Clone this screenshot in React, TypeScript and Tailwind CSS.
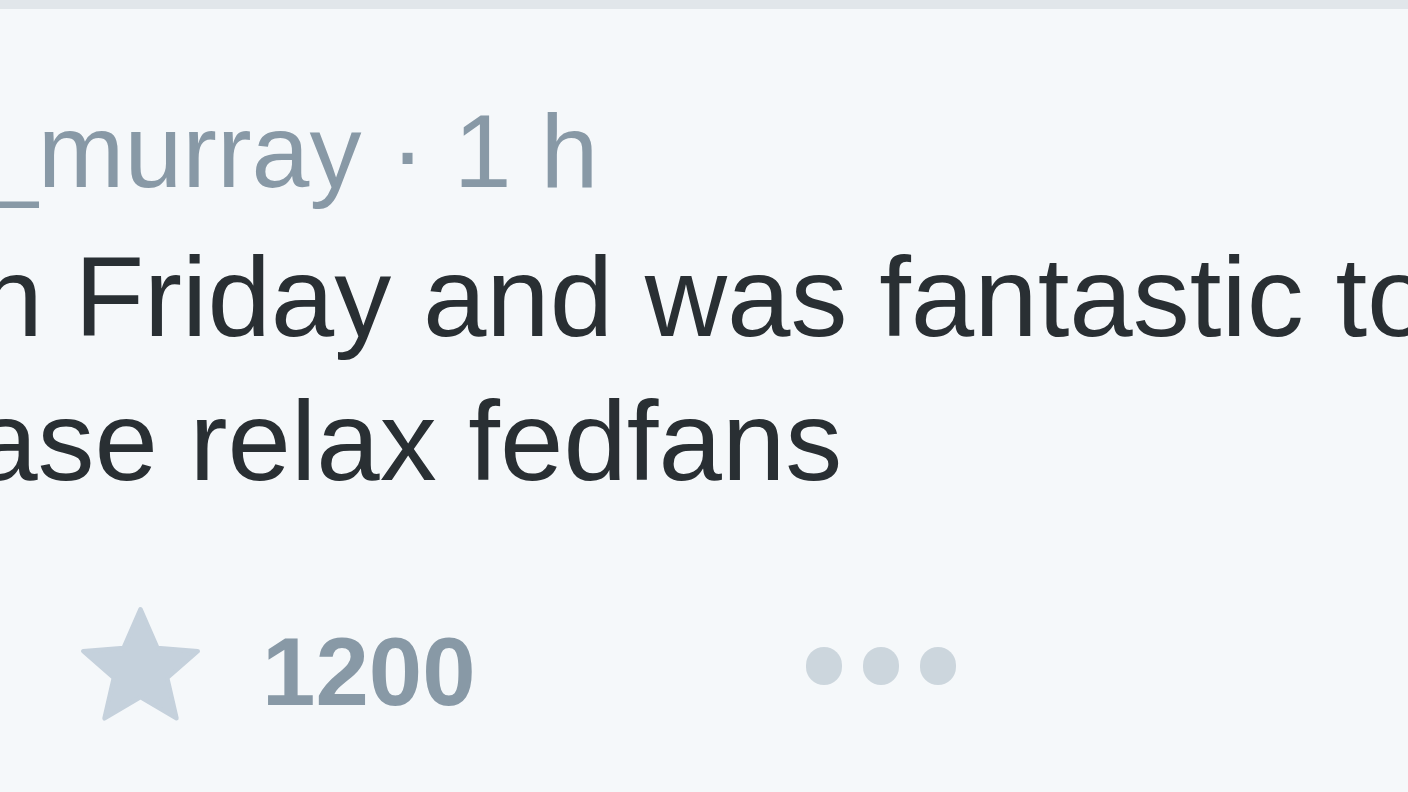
import React from "react";

export default function App() {
  return (
    <div className="w-[1408px] h-[792px] overflow-hidden bg-[#f5f8fa] flex flex-col" style={{ fontFamily: '"Liberation Sans", Arial, sans-serif' }}>
      <div className="h-[9px] bg-[#e1e6ea] shrink-0" />
      <div className="flex flex-col pt-[77px]">
        <div className="whitespace-nowrap text-[104px] leading-[130px] text-[#8899a6] ml-[-20px]">
          _murray · 1 h
        </div>
        <div className="mt-[9px] text-[114px] leading-[144px] text-[#292f33] whitespace-nowrap">
          <div className="ml-[-84px]">on Friday and was fantastic to see</div>
          <div className="ml-[-178px]">please relax fedfans</div>
        </div>
        <div className="mt-[93px] h-[120px] flex items-center pl-[75px]">
          <svg width="131" height="131" viewBox="0 0 24 24" className="shrink-0">
            <path
              d="M12 1.5l3.1 7.1 7.4.6-5.6 4.9 1.7 7.4L12 17.6l-6.6 3.9 1.7-7.4-5.6-4.9 7.4-.6z"
              fill="#c5d1dc"
              stroke="#c5d1dc"
              strokeWidth="0.8"
              strokeLinejoin="round"
            />
          </svg>
          <span className="ml-[56px] mt-[12px] text-[96px] font-bold leading-none text-[#8899a6]">1200</span>
          <div className="ml-[330px] flex items-center gap-[21px]">
            <span className="w-[36px] h-[38px] rounded-full bg-[#ccd6dd]" />
            <span className="w-[36px] h-[38px] rounded-full bg-[#ccd6dd]" />
            <span className="w-[36px] h-[38px] rounded-full bg-[#ccd6dd]" />
          </div>
        </div>
      </div>
    </div>
  );
}
